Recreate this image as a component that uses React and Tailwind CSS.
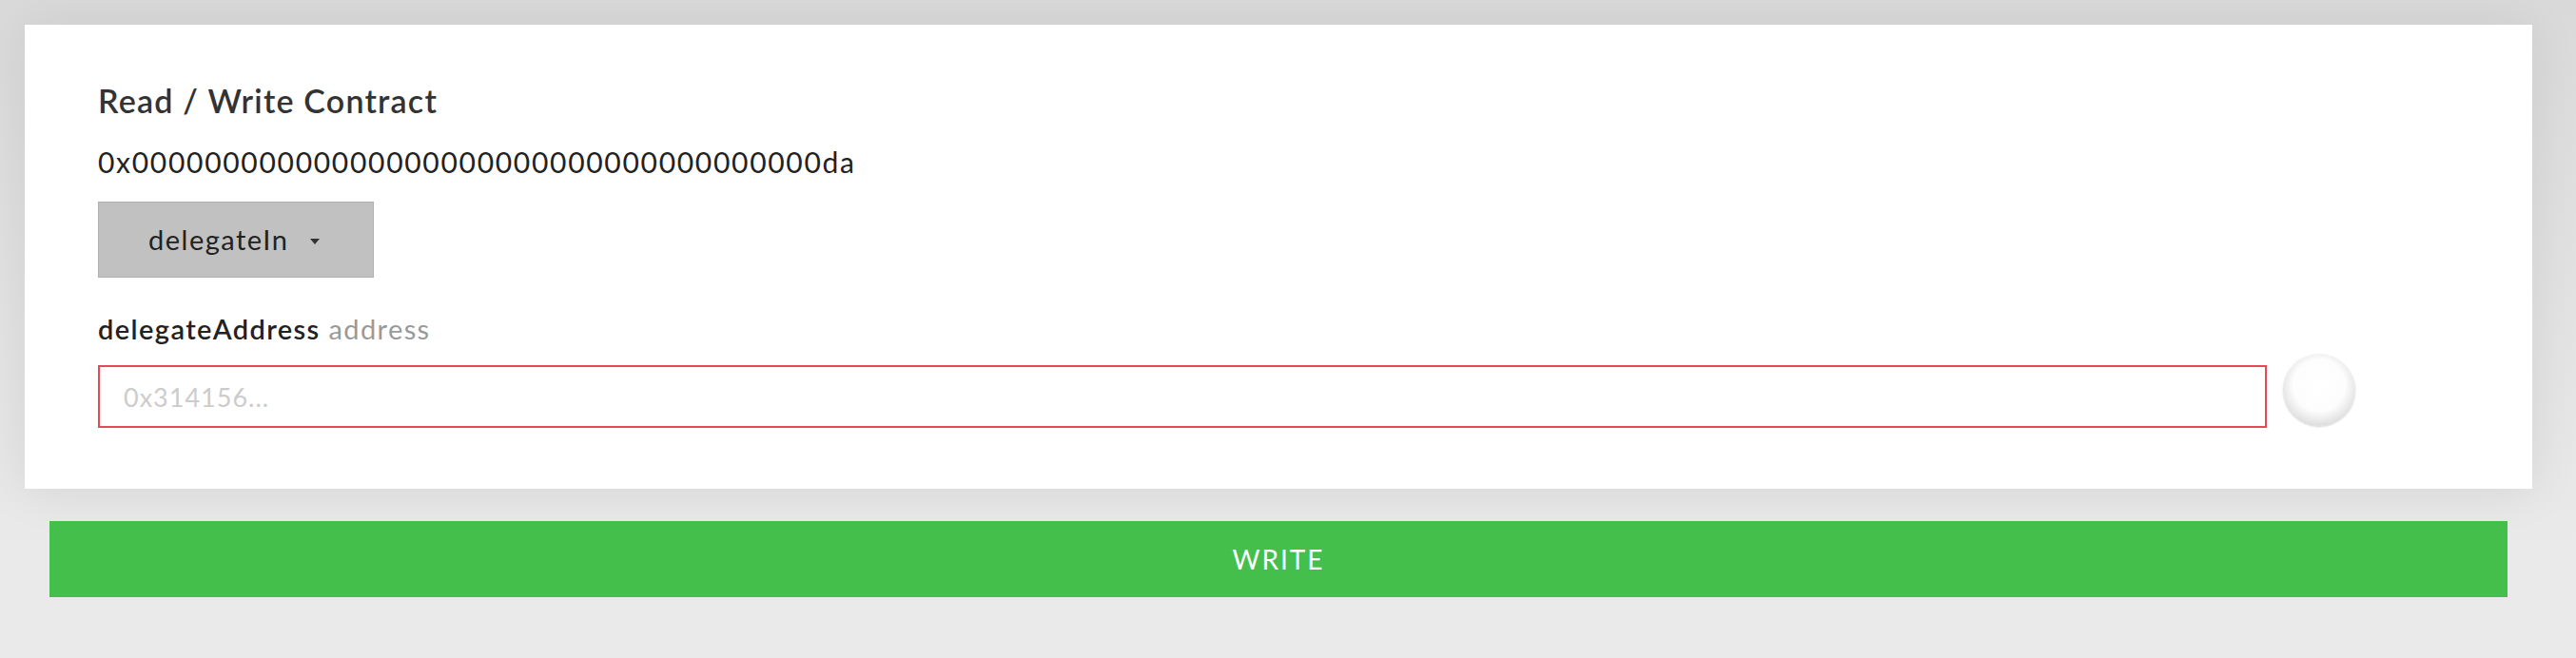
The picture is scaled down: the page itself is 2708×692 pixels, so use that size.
import React from 'react';

const font = { fontFamily: 'Lato, "Open Sans", sans-serif' };

const App = () => {
  return (
    <div
      className="w-[2708px] min-h-[692px] bg-[linear-gradient(#d9d9d9,#eaeaea_85%)] pt-[26px] pl-[26px] pr-[46px] pb-[64px] text-[#333]"
      style={font}
    >
      <div className="bg-white h-[488px] pt-[60px] pl-[77px] pr-[186px] shadow-[0_4px_50px_rgba(0,0,0,0.08)]">
        <h1 className="h-[40px] leading-[40px] text-[34px] font-semibold tracking-[1.2px] text-[#333]">
          Read / Write Contract
        </h1>
        <div className="mt-[24px] h-[40px] leading-[40px] text-[30px] tracking-[1.7px] text-[#222]">
          0x00000000000000000000000000000000000000da
        </div>
        <button className="mt-[22px] flex items-center gap-[22px] h-[80px] w-[290px] pl-[52px] bg-[#c1c1c1] border border-[#b0b0b0] text-[29px] tracking-[1.5px] text-[#222]">
          <span>delegateIn</span>
          <svg width="12" height="8" viewBox="0 0 12 8" className="mt-[4px]">
            <path d="M1 1 L11 1 L6 7 Z" fill="#333" />
          </svg>
        </button>
        <div className="mt-[36px] h-[36px] leading-[36px] text-[29px] tracking-[1.4px]">
          <span className="font-semibold text-[#222]">delegateAddress</span>{' '}
          <span className="text-[#999]">address</span>
        </div>
        <div className="mt-[8px] flex items-start gap-[17px]">
          <input
            type="text"
            placeholder="0x314156..."
            className="mt-[12px] flex-1 h-[66px] border-2 border-[#e8475a] px-[25px] text-[27px] tracking-[1px] placeholder:text-[#cccccc] outline-none"
            style={font}
          />
          <div className="w-[76px] h-[76px] rounded-full bg-[radial-gradient(circle_at_50%_44%,#ffffff_0%,#fdfdfd_48%,#e3e3e3_70%,#c6c6c6_87%,#a9a9a9_100%)] shadow-[0_1px_2px_rgba(0,0,0,0.18)]" />
        </div>
      </div>
      <button className="mt-[34px] mx-[26px] w-[2584px] h-[80px] bg-[#44bf4b] text-white text-[28px] tracking-[2px] flex items-center justify-center">
        WRITE
      </button>
    </div>
  );
};

export default App;
